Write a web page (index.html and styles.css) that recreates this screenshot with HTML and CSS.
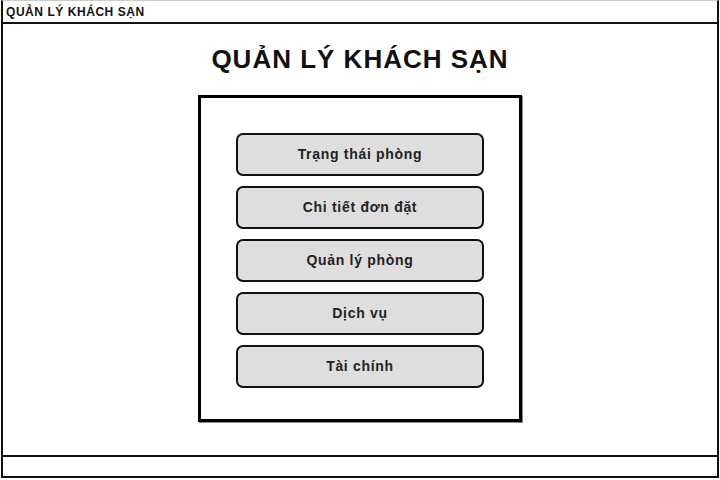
FILE: index.html
```html
<!DOCTYPE html>
<html lang="vi">
<head>
<meta charset="utf-8">
<link rel="stylesheet" href="styles.css">
</head>
<body>
<div class="frame">
  <div class="titlebar">QUẢN LÝ KHÁCH SẠN</div>
  <main class="content">
    <h1 class="heading">QUẢN LÝ KHÁCH SẠN</h1>
    <div class="menu">
      <div class="btn">Trạng thái phòng</div>
      <div class="btn">Chi tiết đơn đặt</div>
      <div class="btn">Quản lý phòng</div>
      <div class="btn">Dịch vụ</div>
      <div class="btn">Tài chính</div>
    </div>
  </main>
  <div class="footer"></div>
</div>
</body>
</html>
```
FILE: styles.css
```css
html, body {
  margin: 0;
  padding: 0;
  background: #fff;
}
body {
  width: 720px;
  height: 480px;
  font-family: "Liberation Sans", Arial, sans-serif;
  color: #111;
}
.frame {
  box-sizing: border-box;
  margin-left: 1px;
  width: 718px;
  height: 478px;
  border: 2px solid #111;
  border-top: 1px solid #ccc;
  display: flex;
  flex-direction: column;
}
.titlebar {
  height: 21px;
  border-bottom: 2px solid #111;
  font-size: 12px;
  font-weight: bold;
  line-height: 22px;
  padding-left: 3px;
  letter-spacing: 0.55px;
}
.content {
  flex: 1;
  display: flex;
  flex-direction: column;
  align-items: center;
}
.heading {
  margin: 18px 0 0 0;
  font-size: 26px;
  line-height: 35px;
  font-weight: bold;
  letter-spacing: 1px;
  color: #111;
}
.menu {
  margin-top: 18px;
  width: 324px;
  height: 327px;
  box-sizing: border-box;
  border: 3px solid #000;
  box-shadow: 1px 1px 0 #888;
  padding: 35px 35px 0 35px;
  display: flex;
  flex-direction: column;
  gap: 10px;
}
.btn {
  box-sizing: border-box;
  height: 43px;
  border: 2px solid #111;
  border-radius: 7px;
  background: #dedede;
  display: flex;
  align-items: center;
  justify-content: center;
  font-size: 14px;
  font-weight: bold;
  color: #222;
  letter-spacing: 0.7px;
  padding-bottom: 1px;
}
.footer {
  height: 19px;
  border-top: 2px solid #111;
}
```
